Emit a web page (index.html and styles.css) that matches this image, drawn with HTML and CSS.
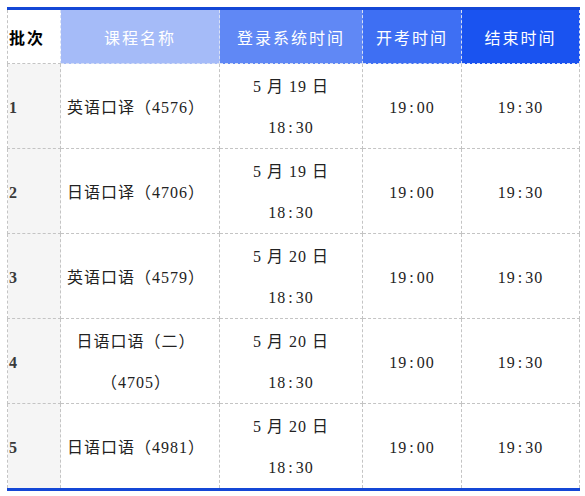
FILE: index.html
```html
<!DOCTYPE html>
<html lang="zh-CN">
<head>
<meta charset="utf-8">
<link rel="stylesheet" href="styles.css">
</head>
<body>
<table class="schedule">
  <colgroup>
    <col class="c-batch">
    <col class="c-course">
    <col class="c-login">
    <col class="c-start">
    <col class="c-end">
  </colgroup>
  <thead>
    <tr>
      <th class="h-batch">批次</th>
      <th class="h-course">课程名称</th>
      <th class="h-login">登录系统时间</th>
      <th class="h-start">开考时间</th>
      <th class="h-end">结束时间</th>
    </tr>
  </thead>
  <tbody>
    <tr>
      <td class="batch">1</td>
      <td class="course">英语口译（4576）</td>
      <td class="login">5 月 19 日<br>18<span class="colon">:</span>30</td>
      <td class="time">19<span class="colon">:</span>00</td>
      <td class="time">19<span class="colon">:</span>30</td>
    </tr>
    <tr>
      <td class="batch">2</td>
      <td class="course">日语口译（4706）</td>
      <td class="login">5 月 19 日<br>18<span class="colon">:</span>30</td>
      <td class="time">19<span class="colon">:</span>00</td>
      <td class="time">19<span class="colon">:</span>30</td>
    </tr>
    <tr>
      <td class="batch">3</td>
      <td class="course">英语口语（4579）</td>
      <td class="login">5 月 20 日<br>18<span class="colon">:</span>30</td>
      <td class="time">19<span class="colon">:</span>00</td>
      <td class="time">19<span class="colon">:</span>30</td>
    </tr>
    <tr>
      <td class="batch">4</td>
      <td class="course">日语口语（二）<br>（4705）</td>
      <td class="login">5 月 20 日<br>18<span class="colon">:</span>30</td>
      <td class="time">19<span class="colon">:</span>00</td>
      <td class="time">19<span class="colon">:</span>30</td>
    </tr>
    <tr>
      <td class="batch">5</td>
      <td class="course">日语口语（4981）</td>
      <td class="login">5 月 20 日<br>18<span class="colon">:</span>30</td>
      <td class="time">19<span class="colon">:</span>00</td>
      <td class="time">19<span class="colon">:</span>30</td>
    </tr>
  </tbody>
</table>
</body>
</html>
```

FILE: styles.css
```css
html, body {
  margin: 0;
  padding: 0;
  background: #ffffff;
}

body {
  padding: 7px 0 0 7px;
  font-family: "Liberation Serif", "Noto Sans CJK SC", serif;
  font-size: 16px;
  color: #222222;
}

.schedule {
  border-collapse: collapse;
  table-layout: fixed;
  width: 572px;
  border-top: 3px solid #1447d6;
  border-bottom: 3px solid #1447d6;
}

.c-batch { width: 53px; }
.c-course { width: 159px; }
.c-login { width: 143px; }
.c-start { width: 99px; }
.c-end { width: 118px; }

.schedule th,
.schedule td {
  border: 1px dashed #c4c4c4;
  padding: 0;
  text-align: center;
  vertical-align: middle;
  letter-spacing: 1px;
}

.schedule th {
  height: 53px;
  font-weight: normal;
  color: #ffffff;
  letter-spacing: 2px;
  border-color: #d8e0f4;
  border-top: none;
}

.schedule th.h-batch {
  background: #ffffff;
  color: #000000;
  font-weight: bold;
  text-align: left;
  padding-left: 1px;
  border-left-color: #c4c4c4;
  border-bottom-color: #c4c4c4;
}

.h-course { background: #a5bbf8; }
.h-login { background: #6088f5; }
.h-start { background: #3e6ff3; }
.h-end { background: #1a53f0; }

.schedule td {
  height: 82px;
  padding-top: 2px;
  line-height: 41px;
}

.schedule td.batch {
  background: #f5f5f5;
  text-align: left;
  padding-left: 1px;
  font-weight: bold;
  color: #3a3a3a;
}

.schedule td.course {
  padding-right: 8px;
}

.colon {
  padding: 0 2px;
}
```
